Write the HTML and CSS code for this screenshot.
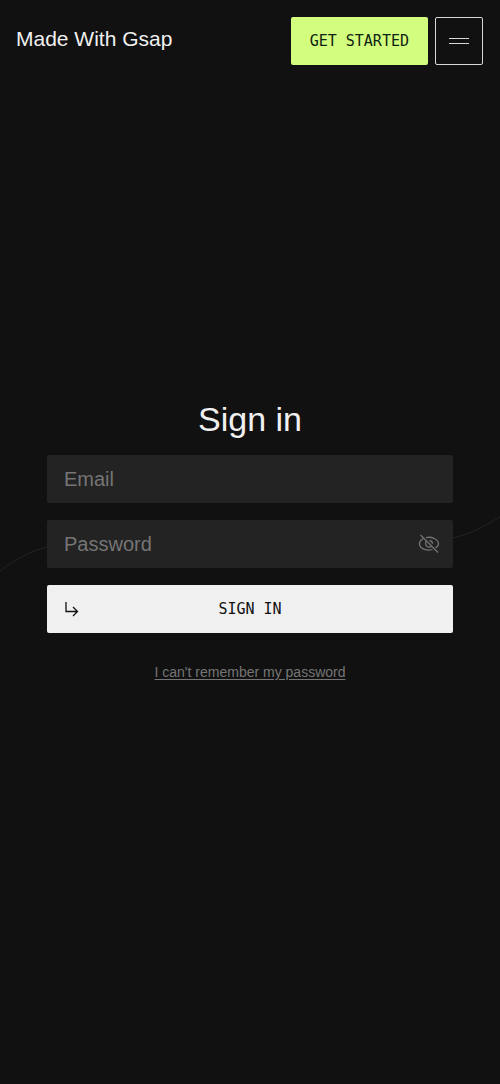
FILE: index.html
```html
<!DOCTYPE html>
<html lang="en">
<head>
  <meta charset="UTF-8">
  <meta name="viewport" content="width=device-width, initial-scale=1.0">
  <title>Sign in - Made With Gsap</title>
  <link rel="stylesheet" href="styles.css">
</head>
<body>
  <header class="header">
    <a href="#" class="logo">Made With Gsap</a>
    <div class="header-actions">
      <a href="#" class="btn btn-green">GET STARTED</a>
      <button type="button" class="menu-btn" aria-label="Open menu">
        <svg width="20" height="8" viewBox="0 0 20 8" fill="none" stroke="currentColor">
          <path d="M0 1.5H20M0 6.5H20"/>
        </svg>
      </button>
    </div>
  </header>

  <main class="main">
    <form class="signin">
      <h1 class="title">Sign in</h1>

      <div class="field">
        <input class="input" type="email" placeholder="Email" aria-label="Email">
      </div>

      <div class="field">
        <!-- decorative line passing behind the form -->
        <svg class="curve" viewBox="0 0 500 60" preserveAspectRatio="none" fill="none" stroke="currentColor" aria-hidden="true">
          <path d="M0 57C16 45 30 37 47 33C120 16 180 44 250 44S380 40 453 24C470 20 485 12 500 3" vector-effect="non-scaling-stroke"/>
        </svg>
        <input class="input input-password" type="password" placeholder="Password" aria-label="Password">
        <button type="button" class="eye-btn" aria-label="Show password">
          <svg width="22" height="20" viewBox="0 0 22 20" fill="none" stroke="currentColor" stroke-width="1.3">
            <path d="M2.500 1L20 18.500"/>
            <path d="M8 3.600C13.500 2.200 20.300 5.300 20.500 9.800C20.500 11.500 19.200 13 17.400 14"/>
            <path d="M5 4.800C2.800 6 1.400 7.800 1.400 9.700C1.500 14.300 8.500 17.500 14.500 15.500"/>
            <path d="M8 7.300C6.800 10 8.300 13.200 11.200 13.200C12 13.200 12.800 12.900 13.400 12.400"/>
            <path d="M11.500 6.500C13.200 6.700 14.400 8 14.500 9.700"/>
          </svg>
        </button>
      </div>

      <button type="submit" class="btn btn-submit">
        <svg class="arrow" width="14" height="16" viewBox="0 0 14 16" fill="none" stroke="currentColor" stroke-width="1.3">
          <path d="M1 1V10.500H12.300M8 6L12.500 10.500L8 15"/>
        </svg>
        <span>SIGN IN</span>
      </button>

      <a href="#" class="forgot">I can't remember my password</a>
    </form>
  </main>
</body>
</html>
```

FILE: styles.css
```css
* {
  margin: 0;
  padding: 0;
  box-sizing: border-box;
}

body {
  font-family: "Liberation Sans", Arial, sans-serif;
  background: #111;
  color: #f0f0f0;
  min-height: 100vh;
  display: flex;
  flex-direction: column;
}

.header {
  display: flex;
  justify-content: space-between;
  align-items: flex-start;
  padding: 17px 17px 17px 16px;
}

.logo {
  color: inherit;
  font-size: 21px;
  line-height: 44px;
  text-decoration: none;
}

.header-actions {
  display: flex;
  gap: 7px;
}

.btn {
  display: flex;
  align-items: center;
  justify-content: center;
  height: 48px;
  border: 1px solid transparent;
  border-radius: 2px;
  font-family: "DejaVu Sans Mono", monospace;
  font-size: 15px;
  text-decoration: none;
  cursor: pointer;
}

.btn-green {
  padding: 0 18px;
  background: #d3fd7f;
  color: #0f2410;
}

.menu-btn {
  display: flex;
  align-items: center;
  justify-content: center;
  width: 48px;
  height: 48px;
  background: none;
  border: 1px solid #d8d8d8;
  border-radius: 2px;
  color: #d8d8d8;
  cursor: pointer;
}

/* bottom padding balances the header so the form sits mid-screen */
.main {
  flex: 1;
  display: flex;
  align-items: center;
  padding: 0 47px 86px;
}

.signin {
  width: 100%;
  display: flex;
  flex-direction: column;
}

.title {
  margin-bottom: 16px;
  font-size: 34px;
  font-weight: 400;
  line-height: 40px;
  text-align: center;
}

.field {
  position: relative;
  margin-bottom: 17px;
}

.curve {
  position: absolute;
  left: -47px;
  top: -6px;
  width: 100vw;
  height: 60px;
  color: #242424;
  pointer-events: none;
}

.input {
  position: relative;
  display: block;
  width: 100%;
  height: 48px;
  padding: 0 17px;
  background: #232323;
  border: none;
  border-radius: 2px;
  color: #f0f0f0;
  font-family: inherit;
  font-size: 20px;
}

.input-password {
  padding-right: 48px;
}

.input::placeholder {
  color: #757575;
  opacity: 1;
}

.eye-btn {
  position: absolute;
  top: 0;
  right: 0;
  display: flex;
  align-items: center;
  justify-content: center;
  width: 48px;
  height: 48px;
  background: none;
  border: none;
  color: #757575;
  cursor: pointer;
}

.btn-submit {
  position: relative;
  width: 100%;
  background: #f0f0f0;
  color: #111;
}

.arrow {
  position: absolute;
  left: 17px;
}

.forgot {
  align-self: center;
  margin-top: 30px;
  color: #757575;
  font-size: 14px;
  line-height: 18px;
  text-underline-offset: 2px;
}
```
